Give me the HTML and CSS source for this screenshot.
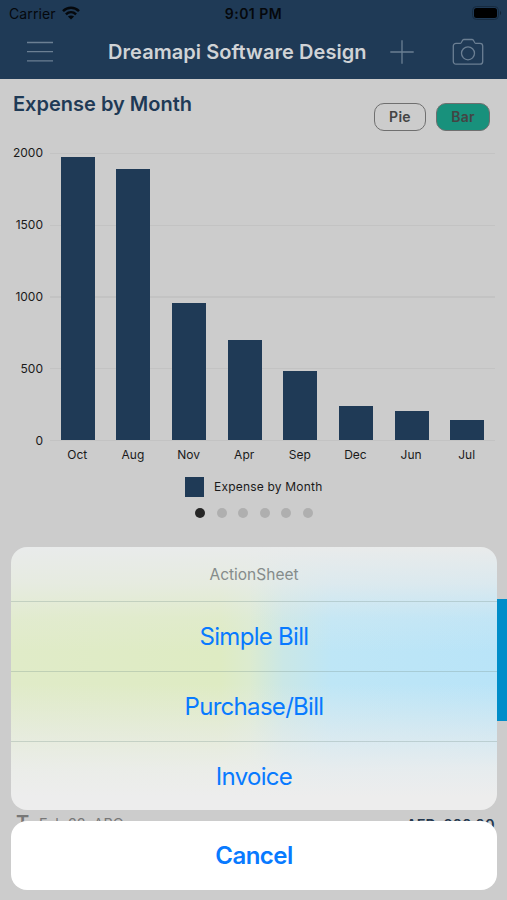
FILE: index.html
```html
<!DOCTYPE html>
<html lang="en">
<head>
    <meta charset="UTF-8">
    <meta name="viewport" content="width=device-width, initial-scale=1.0">
    <title>Dreamapi Software Design</title>
    <link rel="stylesheet" href="styles.css">
</head>
<body>
    <div class="screen">
        <header class="header">
            <div class="status-bar">
                <div class="carrier">
                    <span>Carrier</span>
                    <svg width="18" height="14" viewBox="0 0 18 14" fill="none" stroke="#05080c" stroke-width="2.5">
                        <path d="M1 5.2C5.6 .7 12.4 .7 17 5.2"/>
                        <path d="M3.9 8.4c3-2.8 7.200-2.8 10.200 0"/>
                        <path d="M9 13.500L5.900 10.600c1.800-1.600 4.400-1.600 6.200 0z" fill="#05080c" stroke="none"/>
                    </svg>
                </div>
                <span class="time">9:01 PM</span>
                <svg class="battery" width="30" height="14" viewBox="0 0 30 14">
                    <rect x=".5" y=".5" width="26" height="13" rx="4" fill="none" stroke="#172b40"/>
                    <rect x="2" y="2" width="23" height="10" rx="2.500" fill="#000"/>
                    <path d="M28 5c1.500.5 1.500 3.500 0 4z" fill="#132436"/>
                </svg>
            </div>
            <nav class="nav-bar">
                <svg class="menu" width="28" height="24" viewBox="0 0 28 24" stroke="#6b7f93" stroke-width="1.300">
                    <path d="M1 2.500h26M1 11.700h26M1 20.900h26"/>
                </svg>
                <h1>Dreamapi Software Design</h1>
                <svg class="plus" width="24" height="24" viewBox="0 0 24 24" stroke="#6b7f93" stroke-width="1.300">
                    <path d="M.3 12h23.400M12 .3v23.400"/>
                </svg>
                <svg class="camera" width="32" height="28" viewBox="0 0 32 28" fill="none" stroke="#6b7f93" stroke-width="1.300">
                    <path d="M4 5.300h4.500c1.500 0 1.200-3.800 3.200-3.800h8.600c2 0 1.700 3.800 3.200 3.800H28a2.700 2.700 0 0 1 2.700 2.700v15.500A2.700 2.700 0 0 1 28 26.200H4a2.700 2.700 0 0 1-2.700-2.700V8A2.700 2.700 0 0 1 4 5.300z"/>
                    <circle cx="16" cy="15.300" r="6.500"/>
                </svg>
            </nav>
        </header>

        <main>
            <div class="chart-head">
                <h2>Expense by Month</h2>
                <div class="toggle">
                    <span class="pill">Pie</span>
                    <span class="pill active">Bar</span>
                </div>
            </div>

            <div class="chart">
                <div class="y-axis">
                    <span>2000</span>
                    <span>1500</span>
                    <span>1000</span>
                    <span>500</span>
                    <span>0</span>
                </div>
                <div class="plot">
                    <div class="bar" style="height: 283.500px"></div>
                    <div class="bar" style="height: 271px"></div>
                    <div class="bar" style="height: 137.500px"></div>
                    <div class="bar" style="height: 100px"></div>
                    <div class="bar" style="height: 69.500px"></div>
                    <div class="bar" style="height: 34px"></div>
                    <div class="bar" style="height: 29.500px"></div>
                    <div class="bar" style="height: 20.300px"></div>
                </div>
            </div>
            <div class="x-axis">
                <span>Oct</span>
                <span>Aug</span>
                <span>Nov</span>
                <span>Apr</span>
                <span>Sep</span>
                <span>Dec</span>
                <span>Jun</span>
                <span>Jul</span>
            </div>
            <div class="legend"><i></i><span>Expense by Month</span></div>
            <div class="dots"><i class="on"></i><i></i><i></i><i></i><i></i><i></i></div>

            <div class="card-edge"></div>

            <div class="entry">
                <span class="entry-type">T</span>
                <span class="entry-name">Feb 22, ABC</span>
                <span class="entry-amount">AED. 200.00</span>
            </div>
        </main>

        <!-- Action sheet over the dimmed page -->
        <div class="action-sheet">
            <div class="options">
                <p class="sheet-title">ActionSheet</p>
                <div class="option">Simple Bill</div>
                <div class="option">Purchase/Bill</div>
                <div class="option">Invoice</div>
            </div>
            <div class="cancel">Cancel</div>
        </div>
    </div>
</body>
</html>
```
FILE: styles.css
```css
* {
    margin: 0;
    padding: 0;
    box-sizing: border-box;
}

body {
    font-family: Inter, "Liberation Sans", sans-serif;
    background-color: #cccccc;
    color: #1a1a1a;
}

.screen {
    position: relative;
    width: 507px;
    height: 900px;
    overflow: hidden;
}

.header {
    height: 79px;
    background-color: #1f3a56;
}

.status-bar {
    display: grid;
    grid-template-columns: 1fr auto 1fr;
    align-items: center;
    height: 27px;
    padding: 0 5px 0 9px;
    color: #05080c;
    font-size: 14px;
}

.carrier {
    display: flex;
    align-items: center;
    gap: 6px;
}

.carrier span {
    letter-spacing: 0.1px;
}

.carrier svg {
    margin-top: -2px;
}

.time {
    font-weight: 600;
    letter-spacing: 0.5px;
    margin-left: -4px;
}

.battery {
    justify-self: end;
    margin-top: -1px;
}

.nav-bar {
    display: flex;
    align-items: center;
    height: 50px;
    padding-left: 26px;
}

.nav-bar h1 {
    width: 260px;
    margin-left: 54px;
    font-size: 20px;
    font-weight: 600;
    letter-spacing: 0.06px;
    white-space: nowrap;
    color: #d0d3d6;
}

.plus {
    margin-left: 22px;
}

.camera {
    margin-left: 38px;
}

.chart-head {
    display: flex;
    justify-content: space-between;
    height: 74px;
    padding: 12px 17px 0 13px;
}

.chart-head h2 {
    font-size: 20px;
    line-height: 26px;
    font-weight: 600;
    color: #1f3a56;
}

.toggle {
    display: flex;
    gap: 10px;
    padding-top: 12px;
}

.pill {
    width: 52px;
    height: 28px;
    border: 1px solid #6f6f6f;
    border-radius: 10px;
    font-size: 14px;
    line-height: 26px;
    font-weight: 600;
    letter-spacing: 0.3px;
    text-align: center;
    color: #444;
}

.pill.active {
    width: 54px;
    background-color: #18917c;
}

.chart {
    display: flex;
    height: 288px;
}

.y-axis {
    display: flex;
    flex-direction: column;
    justify-content: space-between;
    width: 43px;
    margin: -8px 7px -8px 0;
    font-size: 12px;
    line-height: 16px;
    text-align: right;
}

.plot {
    display: grid;
    grid-template-columns: repeat(8, 1fr);
    align-items: end;
    justify-items: center;
    width: 445px;
    padding-bottom: 1px;
    background: repeating-linear-gradient(#c3c3c3 0 1px, transparent 1px 71.75px);
}

.bar {
    width: 34px;
    background-color: #1f3a56;
}

.x-axis {
    display: grid;
    grid-template-columns: repeat(8, 1fr);
    width: 445px;
    margin: 6px 0 0 49.5px;
    font-size: 12px;
    line-height: 16px;
    text-align: center;
}

.legend {
    display: flex;
    align-items: center;
    gap: 10px;
    margin: 14px 0 0 185px;
    font-size: 12px;
    line-height: 20px;
    letter-spacing: 0.2px;
}

.legend i {
    width: 19px;
    height: 20px;
    background-color: #1f3a56;
}

.dots {
    display: flex;
    gap: 11.6px;
    margin: 11px 0 0 195px;
}

.dots i {
    width: 10px;
    height: 10px;
    border-radius: 50%;
    background-color: #afafaf;
}

.dots .on {
    background-color: #262626;
}

.card-edge {
    width: 30px;
    height: 122px;
    margin: 81px 0 0 auto;
    background-color: #008dc9;
}

.entry {
    display: flex;
    align-items: flex-start;
    margin-top: 91px;
    padding: 0 12.5px 0 16px;
    font-size: 14.5px;
    line-height: 20px;
}

.entry-type {
    width: 23px;
    font-size: 20px;
    line-height: 23px;
    font-weight: 600;
    color: #777;
}

.entry-name {
    color: #777;
    margin-top: 2px;
    letter-spacing: -0.1px;
}

.entry-amount {
    margin: 3px 0 0 auto;
    font-weight: 600;
    color: #24384f;
}

.action-sheet {
    position: absolute;
    left: 11px;
    right: 10px;
    top: 547px;
    text-align: center;
    color: #087aff;
}

.options {
    height: 263px;
    border-radius: 16px;
    /* grey fades at top and bottom over the green and blue halves */
    background:
        linear-gradient(#e9ebeb 0, #e9ebebb3 14%, #e9ebeb33 27%, #e9ebeb00 40%, #e9ebeb00 52%, #ebecec88 70%, #ecedede0 84%, #ededed 95%),
        linear-gradient(90deg, #e0ebc8 0, #deebc3 43%, #dcebcf 49%, #cae7e6 56%, #bee6f6 66%, #b9e4f8 100%);
}

.sheet-title {
    height: 53.5px;
    font-size: 15.5px;
    line-height: 55px;
    color: #858c8b;
}

.option {
    height: 70px;
    border-top: 1px solid rgba(120, 145, 140, 0.3);
    font-size: 24px;
    line-height: 70px;
    letter-spacing: -0.7px;
}

.cancel {
    height: 69px;
    margin-top: 11px;
    border-radius: 16px;
    background-color: #fff;
    font-size: 24px;
    line-height: 69px;
    font-weight: 600;
    letter-spacing: -0.55px;
}
```
